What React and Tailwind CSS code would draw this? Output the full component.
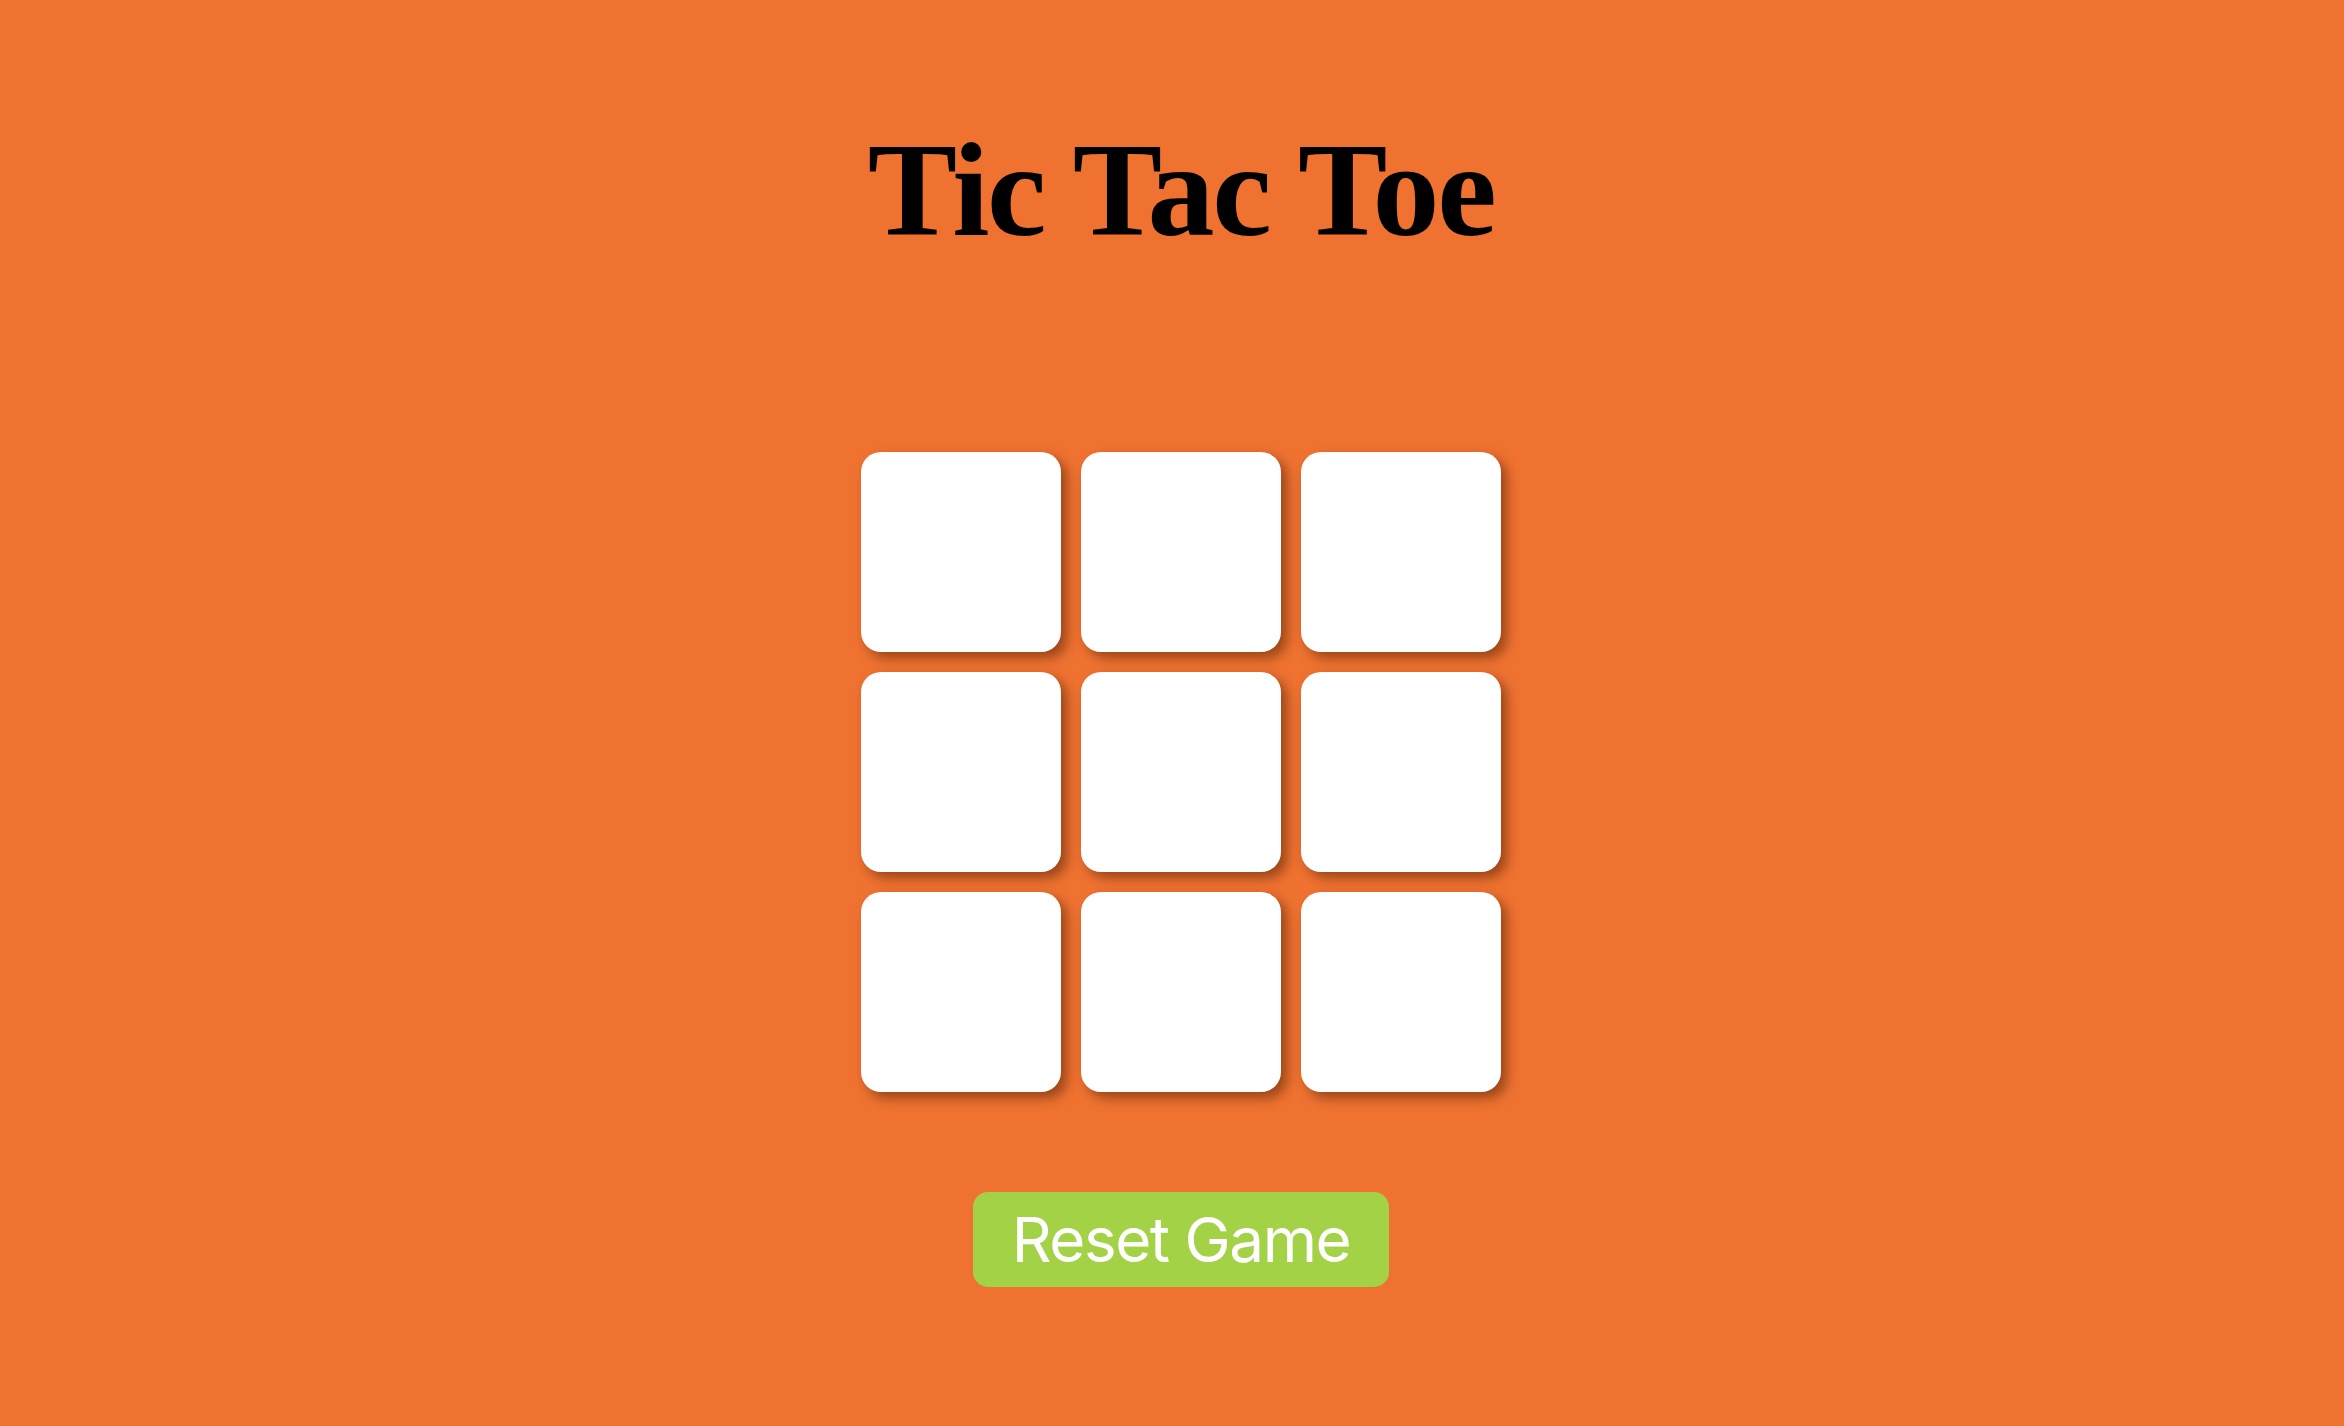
import React, { useState } from 'react';

export default function App() {
  const [board, setBoard] = useState(Array(9).fill(null));
  const [xNext, setXNext] = useState(true);

  const play = (i) => {
    if (board[i]) return;
    const next = board.slice();
    next[i] = xNext ? 'X' : 'O';
    setBoard(next);
    setXNext(!xNext);
  };

  return (
    <div className="min-h-screen w-full bg-[#ef7230] flex flex-col items-center pl-[18px]">
      <h1 className="pt-[123px] text-[134px] leading-none font-bold tracking-[-2.4px] text-black font-['Liberation_Serif']">
        Tic Tac Toe
      </h1>

      {/* board */}
      <div className="mt-[195px] grid grid-cols-3 gap-5">
        {board.map((v, i) => (
          <button
            key={i}
            onClick={() => play(i)}
            className="w-[200px] h-[200px] bg-white rounded-[20px] shadow-[6px_6px_12px_rgba(70,25,0,0.5)] text-[120px] font-bold text-black flex items-center justify-center font-['Inter']"
          >
            {v}
          </button>
        ))}
      </div>

      <button
        onClick={() => {
          setBoard(Array(9).fill(null));
          setXNext(true);
        }}
        className="mt-[100px] w-[416px] h-[95px] rounded-[15px] bg-[#a3d246] text-white text-[62px] tracking-[-1.5px] leading-none font-['Inter'] flex items-center justify-center"
      >
        Reset Game
      </button>
    </div>
  );
}
